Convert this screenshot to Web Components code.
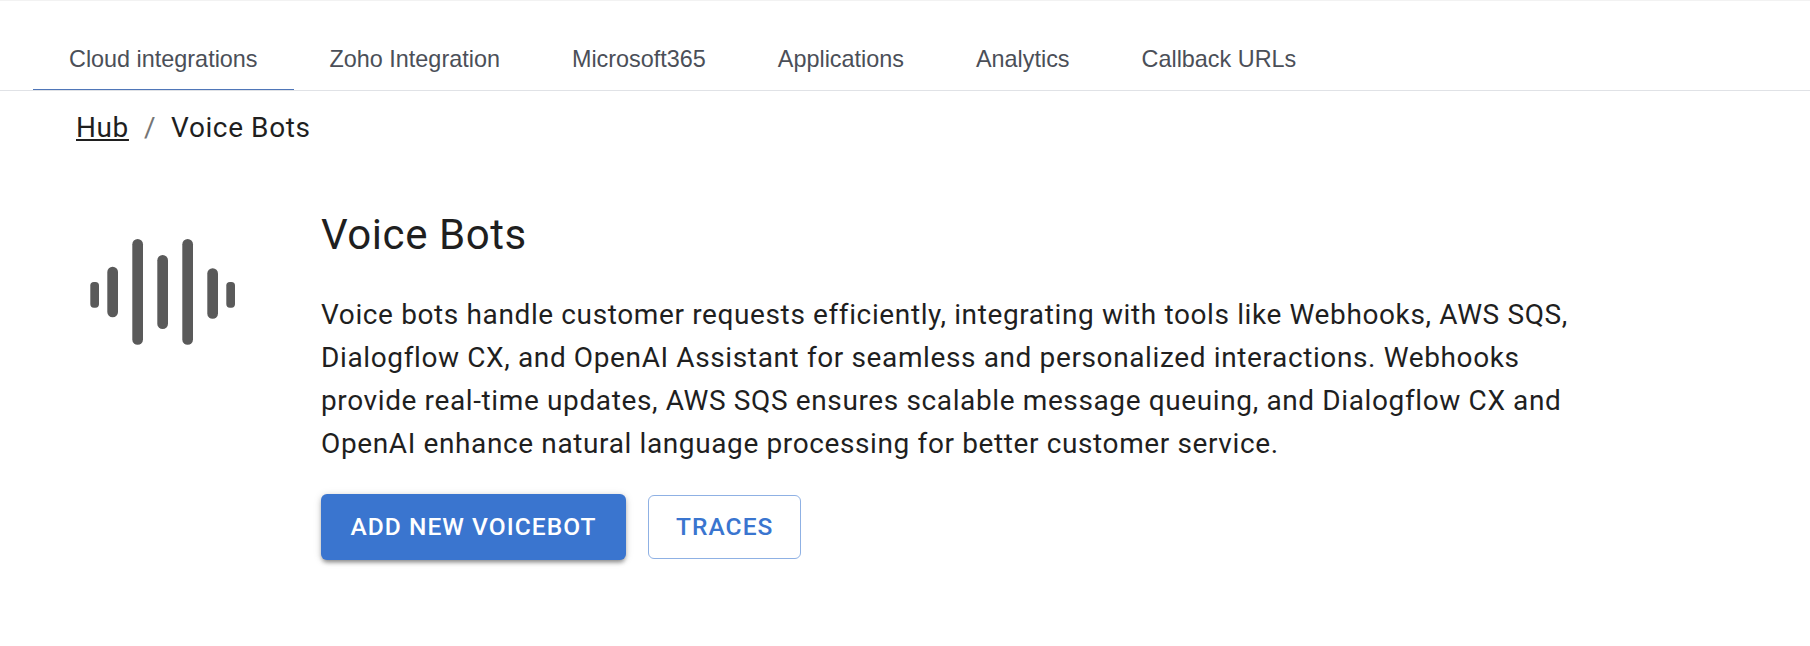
<!DOCTYPE html>
<html lang="en">
<head>
<meta charset="utf-8">
<title>Voice Bots</title>
<style>
  html, body { margin: 0; background: #fff; }
  body { height: 646px; overflow: hidden; border-top: 1px solid #f2f2f2; box-sizing: border-box; }
</style>
</head>
<body>
<hub-tabs>
  <hub-tab active>Cloud integrations</hub-tab>
  <hub-tab>Zoho Integration</hub-tab>
  <hub-tab>Microsoft365</hub-tab>
  <hub-tab>Applications</hub-tab>
  <hub-tab>Analytics</hub-tab>
  <hub-tab>Callback URLs</hub-tab>
</hub-tabs>
<hub-breadcrumb current="Voice Bots"><a href="#">Hub</a></hub-breadcrumb>
<bot-intro heading="Voice Bots">
  <voice-icon slot="icon"></voice-icon>
  Voice bots handle customer requests efficiently, integrating with tools like Webhooks, AWS SQS, Dialogflow CX, and OpenAI Assistant for seamless and personalized interactions. Webhooks provide real-time updates, AWS SQS ensures scalable message queuing, and Dialogflow CX and OpenAI enhance natural language processing for better customer service.
  <hub-button slot="actions" variant="contained">ADD NEW VOICEBOT</hub-button>
  <hub-button slot="actions" variant="outlined">TRACES</hub-button>
</bot-intro>

<script>
class HubTabs extends HTMLElement {
  constructor() {
    super();
    this.attachShadow({ mode: "open" });
    this.shadowRoot.innerHTML = `
    <style>
      :host {
        display: flex;
        height: 90px;
        padding-left: 33px;
        box-sizing: border-box;
        border-bottom: 1px solid #e0e2e6;
      }
    </style>
    <slot></slot>
  `;
  }
}
customElements.define("hub-tabs", HubTabs);

class HubTab extends HTMLElement {
  constructor() {
    super();
    this.attachShadow({ mode: "open" });
    this.shadowRoot.innerHTML = `
    <style>
      :host {
        display: flex;
        align-items: center;
        height: 89px;
        padding: 27px 36px 0;
        box-sizing: border-box;
        font: 23.4px "Liberation Sans", Arial, sans-serif;
        color: #4b4f58;
        white-space: nowrap;
      }
      :host([active]) {
        box-shadow: inset 0 -1px 0 #4f76b8;
      }
    </style>
    <slot></slot>
  `;
  }
}
customElements.define("hub-tab", HubTab);

class HubBreadcrumb extends HTMLElement {
  constructor() {
    super();
    this.attachShadow({ mode: "open" });
    this.shadowRoot.innerHTML = `
    <style>
      :host {
        display: flex;
        align-items: center;
        height: 73px;
        padding-left: 76px;
        font: 400 28px Roboto, sans-serif;
        letter-spacing: 0.6px;
        color: #1f1f1f;
      }
      ::slotted(a) { color: inherit; text-decoration: underline; }
      .sep { margin: 0 15px; color: #757575; }
    </style>
    <slot></slot><span class="sep">/</span><span class="cur"></span>
  `;
  }
  connectedCallback() {
    this.shadowRoot.querySelector(".cur").textContent = this.getAttribute("current");
  }
}
customElements.define("hub-breadcrumb", HubBreadcrumb);

class BotIntro extends HTMLElement {
  constructor() {
    super();
    this.attachShadow({ mode: "open" });
    this.shadowRoot.innerHTML = `
    <style>
      :host {
        display: flex;
        padding: 41px 0 0 90px;
        font-family: Roboto, sans-serif;
        color: #1f1f1f;
      }
      .icon { width: 231px; flex: none; padding-top: 34px; }
      .body { width: 1275px; }
      h1 {
        margin: 0 0 28px;
        font: 400 42px/60px Roboto, sans-serif;
        letter-spacing: 0.55px;
      }
      .text {
        font-size: 28px;
        line-height: 43px;
        letter-spacing: 0.62px;
      }
      .actions { display: flex; gap: 22px; margin-top: 29px; align-items: center; }
    </style>
    <div class="icon"><slot name="icon"></slot></div>
    <div class="body">
      <h1></h1>
      <div class="text"><slot></slot></div>
      <div class="actions"><slot name="actions"></slot></div>
    </div>
  `;
  }
  connectedCallback() {
    this.shadowRoot.querySelector("h1").textContent = this.getAttribute("heading");
  }
}
customElements.define("bot-intro", BotIntro);

class VoiceIcon extends HTMLElement {
  constructor() {
    super();
    this.attachShadow({ mode: "open" });
    this.shadowRoot.innerHTML = `
    <style>
      :host { display: block; width: 145px; height: 106px; }
      svg { display: block; }
    </style>
    <svg width="145" height="106" viewBox="90 238 145 106" fill="#5a5a5a">
      <rect x="90.3" y="281" width="8.7" height="25.7" rx="3.6"/>
      <rect x="107.3" y="265.7" width="10.7" height="50.6" rx="5.3"/>
      <rect x="132.3" y="238" width="10.7" height="105.7" rx="5.3"/>
      <rect x="157.3" y="254" width="10.7" height="74" rx="5.3"/>
      <rect x="182.3" y="238" width="10.7" height="105.7" rx="5.3"/>
      <rect x="207.3" y="267.3" width="10.7" height="50.4" rx="5.3"/>
      <rect x="226.3" y="281" width="8.7" height="25.7" rx="3.6"/>
    </svg>
  `;
  }
}
customElements.define("voice-icon", VoiceIcon);

class HubButton extends HTMLElement {
  constructor() {
    super();
    this.attachShadow({ mode: "open" });
    this.shadowRoot.innerHTML = `
    <style>
      :host {
        display: inline-flex;
        align-items: center;
        justify-content: center;
        box-sizing: border-box;
        height: 66px;
        padding: 0 29.5px 2px;
        border-radius: 6px;
        font: 500 24.5px Roboto, sans-serif;
        letter-spacing: 1.05px;
        white-space: nowrap;
      }
      :host([variant="contained"]) {
        background: #3a75cf;
        color: #fff;
        box-shadow: 0 4px 4px -2px rgba(0,0,0,.32), 0 2px 5px rgba(0,0,0,.16), 0 1px 8px rgba(0,0,0,.12);
      }
      :host([variant="outlined"]) {
        height: 64px;
        padding: 0 27px 2px;
        color: #3a75cf;
        border: 1px solid #8fb1e4;
      }
    </style>
    <slot></slot>
  `;
  }
}
customElements.define("hub-button", HubButton);
</script>
</body>
</html>
